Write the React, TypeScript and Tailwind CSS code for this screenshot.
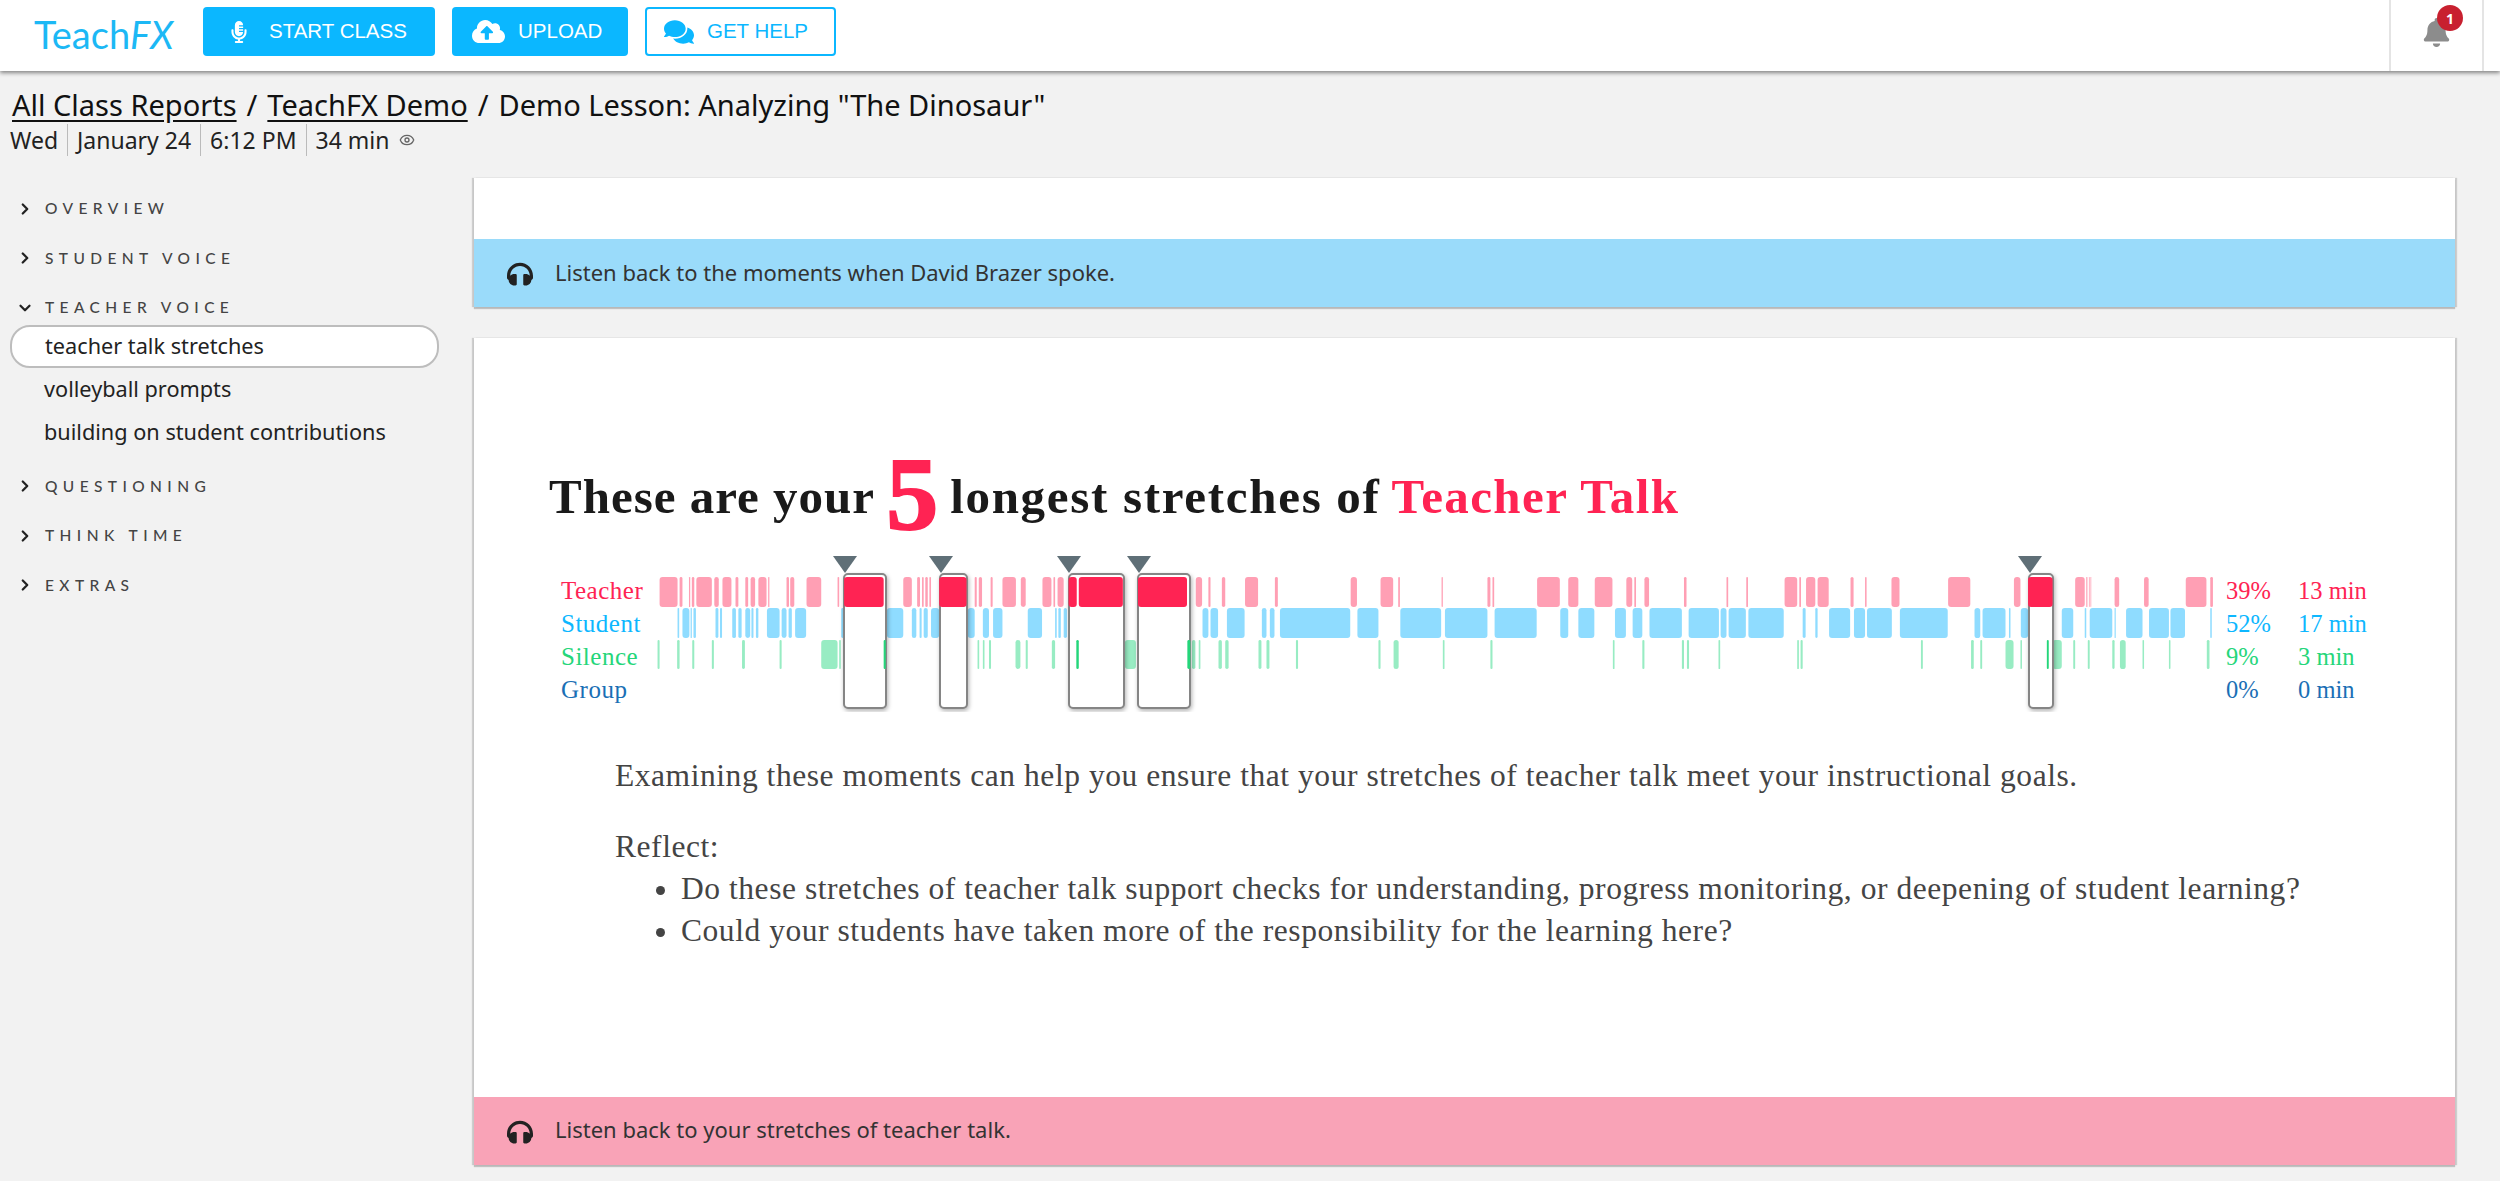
import { ChevronDown, ChevronRight, Eye } from "lucide-react";
import { FaBell, FaCloudUploadAlt, FaComments, FaHeadphones, FaMicrophoneAlt } from "react-icons/fa";

type Bar = [number, number];

// measured from crops of the timeline, each with its own origin and scale
const seg = (origin: number, scale: number, pairs: number[][]): Bar[] =>
  pairs.map(([a, b]) => [origin + a / scale, (b - a) / scale]);
const A = 540, AS = 2.45, B = 1160, BS = 2.376, C = 1800, CS = 2.613;

const teacherLight: Bar[] = [
  ...seg(A, AS, [[293, 337], [342, 349], [365, 368], [372, 378], [383, 421], [427, 438], [447, 469], [479, 486], [503, 510], [516, 527], [535, 555], [559, 562], [604, 610], [613, 623], [653, 689], [729, 733], [890, 911], [924, 931], [936, 940], [944, 950], [954, 958], [1065, 1070], [1075, 1083], [1104, 1109], [1133, 1166], [1178, 1190], [1231, 1253], [1258, 1262], [1268, 1283]]),
  ...seg(B, BS, [[85, 100], [115, 120], [147, 155], [202, 233], [273, 280], [453, 468], [524, 554], [566, 570], [669, 672], [778, 785], [790, 794], [896, 950], [970, 994], [1033, 1075], [1108, 1122], [1127, 1131], [1151, 1162], [1245, 1251], [1346, 1350], [1393, 1397], [1484, 1514], [1519, 1523], [1535, 1557]]),
  ...seg(C, CS, [[46, 75], [132, 140], [170, 174], [239, 260], [387, 445], [559, 576], [719, 744], [748, 751], [755, 757], [759, 761], [822, 834], [899, 911], [1008, 1062], [1072, 1079]]),
];
const teacherDark: Bar[] = [
  ...seg(A, AS, [[745, 842], [978, 1045], [1295, 1315], [1320, 1428]]),
  [1138, 49],
  ...seg(C, CS, [[596, 660]]),
];
const student: Bar[] = [
  ...seg(A, AS, [[337, 341], [349, 366], [369, 372], [376, 382], [430, 437], [441, 446], [471, 480], [486, 494], [503, 515], [518, 523], [529, 535], [556, 587], [592, 604], [609, 617], [625, 652], [738, 745], [850, 890], [911, 922], [930, 935], [940, 950], [958, 978], [1048, 1065], [1085, 1100], [1110, 1133], [1195, 1230], [1262, 1266], [1270, 1276], [1283, 1291]]),
  ...seg(B, BS, [[101, 115], [120, 138], [159, 201], [242, 253], [261, 272], [285, 452], [469, 519], [571, 668], [677, 778], [795, 895], [951, 970], [994, 1032], [1081, 1107], [1123, 1146], [1163, 1240], [1256, 1328], [1332, 1346], [1351, 1392], [1398, 1482], [1527, 1534]]),
  ...seg(C, CS, [[40, 46], [76, 131], [141, 170], [175, 240], [261, 386], [456, 471], [477, 537], [546, 550], [577, 596], [684, 714], [744, 748], [757, 816], [822, 825], [852, 895], [912, 964], [968, 1006], [1072, 1076]]),
];
const silenceLight: Bar[] = [
  ...seg(A, AS, [[288, 293], [336, 342], [373, 378], [421, 426], [495, 502], [587, 592], [689, 729], [733, 737], [1072, 1076], [1085, 1089], [1100, 1105], [1165, 1177], [1190, 1195], [1254, 1262], [1433, 1460]]),
  ...seg(B, BS, [[76, 84], [92, 96], [139, 147], [155, 163], [234, 241], [253, 260], [323, 328], [519, 524], [555, 567], [672, 676], [785, 790], [1076, 1080], [1146, 1151], [1240, 1245], [1252, 1257], [1327, 1331], [1514, 1518], [1522, 1527]]),
  ...seg(C, CS, [[316, 321], [447, 454], [471, 476], [537, 558], [576, 580], [660, 684], [714, 719], [752, 757], [816, 822], [836, 851], [895, 899], [964, 968], [1063, 1070]]),
];
const silenceDark: Bar[] = [
  ...seg(A, AS, [[842, 847], [1314, 1320]]),
  ...seg(B, BS, [[65, 72]]),
  ...seg(C, CS, [[645, 650]]),
];

const stretches = [
  { x: 844, w: 42, tip: 845 },
  { x: 940, w: 27, tip: 941 },
  { x: 1069, w: 55, tip: 1069 },
  { x: 1138, w: 52, tip: 1139 },
  { x: 2029, w: 24, tip: 2030 },
];

function Bars({ bars, y, h, fill }: { bars: Bar[]; y: number; h: number; fill: string }) {
  return (
    <>
      {bars.map(([x, w], i) => (
        <rect key={i} x={x} y={y} width={w} height={h} rx={Math.min(w / 2, 3)} fill={fill} />
      ))}
    </>
  );
}

function Timeline() {
  return (
    <svg width={1570} height={160} viewBox="650 552 1570 160" className="shrink-0">
      <Bars bars={teacherLight} y={577} h={30} fill="#ff9fb4" />
      <Bars bars={student} y={608} h={30} fill="#8fdcff" />
      <Bars bars={silenceLight} y={640} h={29} fill="#98ecc3" />
      {stretches.map((s) => (
        <rect
          key={s.x}
          x={s.x}
          y={574}
          width={s.w}
          height={134}
          rx={4}
          fill="#fff"
          stroke="#858585"
          strokeWidth={2}
          className="drop-shadow-[1px_2px_2px_rgba(0,0,0,0.3)]"
        />
      ))}
      <Bars bars={teacherDark} y={577} h={30} fill="#ff2353" />
      <Bars bars={silenceDark} y={640} h={29} fill="#24d67a" />
      {stretches.map((s) => (
        <polygon key={s.tip} points={`${s.tip - 12},556 ${s.tip + 12},556 ${s.tip},573`} fill="#5f6f77" />
      ))}
    </svg>
  );
}

function NavHeading({ label, open }: { label: string; open?: boolean }) {
  return (
    <div className="h-[49.5px] flex items-center">
      <div className="w-[45px] pl-[17px] text-[#222]">
        {open ? <ChevronDown size={18} strokeWidth={3} className="-ml-[1px]" /> : <ChevronRight size={18} strokeWidth={3} className="-ml-[1px]" />}
      </div>
      <span className="text-[15.5px] font-medium tracking-[5.4px] text-[#444] font-['Lato',sans-serif]">{label}</span>
    </div>
  );
}

function Band({ text, color, lift }: { text: string; color: string; lift: string }) {
  return (
    <div className={`h-[68px] flex items-center pl-[33px] text-[22px] text-[#333] ${color}`}>
      <FaHeadphones size={26} className="text-[#222] mr-[22px] mt-[2px]" />
      <span className={lift}>{text}</span>
    </div>
  );
}

const nunito = "font-['Noto_Sans','Lato',sans-serif]";
const georgia = "font-['Liberation_Serif',serif]";

export default function App() {
  return (
    <div className={`h-[1181px] overflow-hidden bg-[#f2f2f2] text-[#222] ${nunito}`}>
      {/* top bar */}
      <header className="h-[71px] bg-white shadow-[0_2px_4px_rgba(0,0,0,0.45)] flex items-start relative">
        <div className="w-[203px] pl-[34px] pt-[9px] text-[38px] font-normal text-[#1cb8f5] leading-[50px] font-['Lato',sans-serif]">
          Teach<span className="italic">FX</span>
        </div>
        <div className="flex gap-[17px] pt-[7px] font-['Liberation_Sans',sans-serif] text-[20.5px]">
          <button className="w-[232px] h-[49px] rounded-[4px] bg-[#0bb7ff] text-white flex items-center pl-[25px] gap-[19px]">
            <FaMicrophoneAlt size={22} />
            START CLASS
          </button>
          <button className="w-[176px] h-[49px] rounded-[4px] bg-[#0bb7ff] text-white flex items-center pl-[20px] gap-[13px]">
            <FaCloudUploadAlt size={33} />
            UPLOAD
          </button>
          <button className="w-[191px] h-[49px] rounded-[4px] border-2 border-[#0bb7ff] text-[#0bb7ff] flex items-center pl-[17px] gap-[13px]">
            <FaComments size={30} />
            GET HELP
          </button>
        </div>
        <div className="ml-auto mr-[16px] w-[95px] h-full border-x-2 border-[#e4e4e4] relative">
          <FaBell size={29} className="absolute left-[31px] top-[18px] text-[#8c8c8c]" />
          <span className="absolute left-[46px] top-[5px] w-[26px] h-[26px] rounded-full bg-[#c8202f] text-white text-[14px] font-bold flex items-center justify-center">
            1
          </span>
        </div>
      </header>

      {/* breadcrumb */}
      <div className="h-[107px] pt-[16px] pl-[12px]">
        <div className="text-[29px] leading-[36px] text-[#111]">
          <span className="underline underline-offset-4">All Class Reports</span>
          <span className="mx-[10px]">/</span>
          <span className="underline underline-offset-4">TeachFX Demo</span>
          <span className="mx-[10px]">/</span>
          Demo Lesson: Analyzing "The Dinosaur"
        </div>
        <div className="flex items-center text-[23px] leading-[32px] -ml-[2px] mt-[1px]">
          <span className="pr-[9px] border-r border-[#bbb]">Wed</span>
          <span className="px-[9px] border-r border-[#bbb]">January 24</span>
          <span className="px-[9px] border-r border-[#bbb]">6:12 PM</span>
          <span className="pl-[9px]">34 min</span>
          <Eye size={16} className="ml-[10px] text-[#666]" />
        </div>
      </div>

      <div className="flex items-start">
        {/* sidebar */}
        <nav className="w-[474px] shrink-0 mt-[6px]">
          <NavHeading label="OVERVIEW" />
          <NavHeading label="STUDENT VOICE" />
          <NavHeading label="TEACHER VOICE" open />
          <div className="text-[21.7px] text-[#222] -mt-[8px] mb-[8px]">
            <div className="ml-[10px] w-[429px] h-[43px] pl-[33px] bg-white border-2 border-[#bdbdbd] rounded-[20px] flex items-center">teacher talk stretches</div>
            <div className="h-[43px] pl-[44px] flex items-center">volleyball prompts</div>
            <div className="h-[43px] pl-[44px] flex items-center">building on student contributions</div>
          </div>
          <NavHeading label="QUESTIONING" />
          <NavHeading label="THINK TIME" />
          <NavHeading label="EXTRAS" />
        </nav>

        {/* report */}
        <main className="w-[1981px] flex flex-col gap-[31px]">
          <section className="bg-white shadow-[0_2px_1px_rgba(0,0,0,0.2),-2px_0_1px_rgba(0,0,0,0.15),2px_0_1px_rgba(0,0,0,0.15)]">
            <div className="h-[61px]" />
            <Band text="Listen back to the moments when David Brazer spoke." color="bg-[#9adbfa]" lift="pb-[2px]" />
          </section>

          <section className="bg-white shadow-[0_2px_1px_rgba(0,0,0,0.2),-2px_0_1px_rgba(0,0,0,0.15),2px_0_1px_rgba(0,0,0,0.15)]">
            <div className={`h-[759px] ${georgia}`}>
              <h1 className="pt-[113px] pl-[75px] h-[214px] flex items-start text-[49px] tracking-[1px] font-bold text-[#1a1a1a] leading-[92px]">
                These are your
                <span className="text-[104px] text-[#ff2353] mx-[11px] leading-[92px] -mt-[3px] [-webkit-text-stroke:2px_#ff2353]">5</span>
                <span className="tracking-[1.7px]">longest stretches of</span>
                <span className="text-[#ff2353] ml-[11px] tracking-[1.4px]">Teacher Talk</span>
              </h1>
              <div className="flex items-start text-[25px] leading-[33px]">
                <div className="w-[176px] shrink-0 pl-[87px] pt-[22px] tracking-[0.5px]">
                  <div className="text-[#ff2353]">Teacher</div>
                  <div className="text-[#0db7ff]">Student</div>
                  <div className="text-[#25d67a]">Silence</div>
                  <div className="text-[#1a6fb5]">Group</div>
                </div>
                <Timeline />
                <div className="w-[72px] ml-[6px] pt-[22px] text-[24.5px]">
                  <div className="text-[#ff2353]">39%</div>
                  <div className="text-[#0db7ff]">52%</div>
                  <div className="text-[#25d67a]">9%</div>
                  <div className="text-[#1a6fb5]">0%</div>
                </div>
                <div className="pt-[22px] text-[24.5px]">
                  <div className="text-[#ff2353]">13 min</div>
                  <div className="text-[#0db7ff]">17 min</div>
                  <div className="text-[#25d67a]">3 min</div>
                  <div className="text-[#1a6fb5]">0 min</div>
                </div>
              </div>
              <div className="pl-[141px] pt-[43px] text-[31.5px] tracking-[0.55px] leading-[42px] text-[#444]">
                <p className="mb-[29px]">Examining these moments can help you ensure that your stretches of teacher talk meet your instructional goals.</p>
                <p>Reflect:</p>
                <ul className="list-disc pl-[66px]">
                  <li>Do these stretches of teacher talk support checks for understanding, progress monitoring, or deepening of student learning?</li>
                  <li>Could your students have taken more of the responsibility for the learning here?</li>
                </ul>
              </div>
            </div>
            <Band text="Listen back to your stretches of teacher talk." color="bg-[#f9a3b7]" lift="pb-[3px]" />
          </section>
        </main>
      </div>
    </div>
  );
}
